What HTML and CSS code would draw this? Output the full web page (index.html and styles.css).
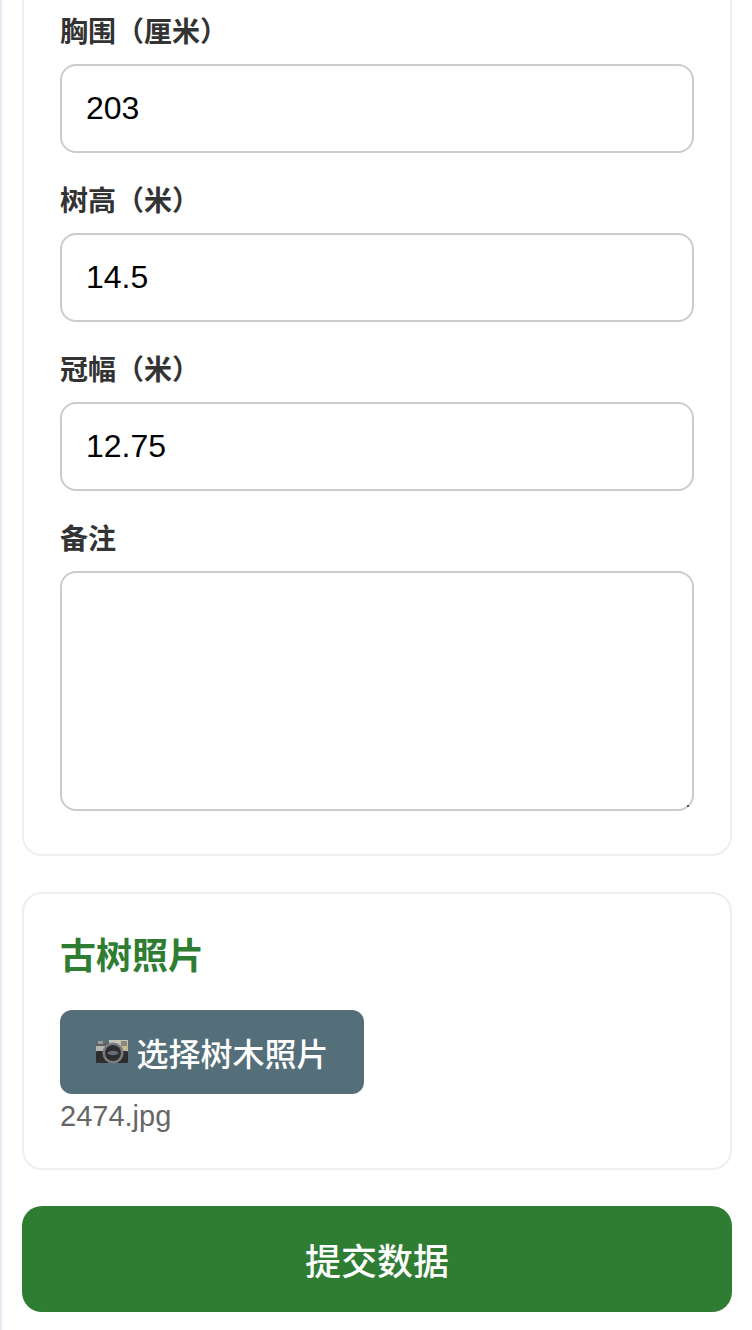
FILE: index.html
```html
<html>
<head>
  <title>古树数据</title>
  <link rel="stylesheet" href="styles.css">
</head>
<body>
  <div class="page">
    <div class="card card-cut">
      <div class="field">
        <label>胸围（厘米）</label>
        <input type="text" value="203">
      </div>
      <div class="field">
        <label>树高（米）</label>
        <input type="text" value="14.5">
      </div>
      <div class="field">
        <label>冠幅（米）</label>
        <input type="text" value="12.75">
      </div>
      <div class="field field-last">
        <label>备注</label>
        <div class="note-box">
          <textarea></textarea>
          <span class="grip"></span>
        </div>
      </div>
    </div>

    <div class="card card-photo">
      <h2>古树照片</h2>
      <button class="photo-btn">
        <svg class="camera" viewBox="0 0 32 24" width="32" height="24">
          <rect x="0" y="3" width="11" height="4" rx="1" fill="#5f5f60"/>
          <rect x="2" y="1" width="5" height="3" fill="#9a9a9a"/>
          <rect x="13" y="0" width="19" height="6" fill="#c4c4bf"/>
          <rect x="25" y="1" width="6" height="5" fill="#8d8875"/>
          <rect x="0" y="6" width="32" height="6" fill="#b5b5b2"/>
          <rect x="0" y="11" width="32" height="12" rx="1" fill="#2e2e30"/>
          <circle cx="17" cy="13" r="10.5" fill="#7b7d80"/>
          <circle cx="17" cy="13" r="8" fill="#2c2e32"/>
          <ellipse cx="17" cy="13" rx="5.5" ry="2.2" fill="#686c72"/>
          <circle cx="29" cy="8" r="1.4" fill="#e8c53a"/>
        </svg>
        <span>选择树木照片</span>
      </button>
      <div class="file-name">2474.jpg</div>
    </div>

    <button class="submit-btn">提交数据</button>
  </div>
</body>
</html>
```

FILE: styles.css
```css
body {
  margin: 0;
  background: #e6ecf4;
  font-family: "Liberation Sans", "Noto Sans CJK SC", sans-serif;
  text-spacing-trim: space-all;
}

.page {
  margin-left: 2px;
  background: #fff;
  padding: 0 20px 18px 20px;
}

.card {
  border: 2px solid #eee;
  border-radius: 20px;
  padding: 36px;
  margin-bottom: 36px;
}

.card-cut {
  border-top: none;
  border-top-left-radius: 0;
  border-top-right-radius: 0;
  padding-top: 16px;
  padding-bottom: 43px;
}

.field {
  margin-bottom: 32px;
}

.field-last {
  margin-bottom: 0;
}

label {
  display: block;
  font-size: 28px;
  line-height: 33px;
  font-weight: bold;
  color: #333;
  margin-bottom: 15px;
}

input,
textarea {
  display: block;
  width: 100%;
  box-sizing: border-box;
  border: 2px solid #ccc;
  border-radius: 16px;
  background: #fff;
  color: #000;
  font-family: inherit;
  font-size: 32px;
  padding: 24px;
  outline: none;
}

input {
  height: 89px;
}

textarea {
  height: 240px;
  resize: none;
}

.note-box {
  position: relative;
}

.grip {
  position: absolute;
  right: 5px;
  bottom: 4px;
  width: 2px;
  height: 2px;
  background: #555;
}

.card-photo {
  padding-top: 40px;
  padding-bottom: 30px;
}

h2 {
  margin: 0 0 30px 0;
  font-size: 36px;
  line-height: 46px;
  font-weight: bold;
  color: #2e7d32;
}

.photo-btn {
  display: flex;
  align-items: center;
  justify-content: center;
  gap: 8px;
  width: 304px;
  height: 84px;
  padding: 0 0 0 1px;
  border: none;
  border-radius: 12px;
  background: #546e7a;
  color: #fff;
  font-family: inherit;
  font-size: 32px;
  font-weight: 500;
}

.camera {
  display: block;
}

.file-name {
  font-size: 29px;
  line-height: 44px;
  color: #666;
}

.submit-btn {
  display: block;
  width: 100%;
  height: 106px;
  border: none;
  border-radius: 20px;
  background: #2e7d32;
  color: #fff;
  font-family: inherit;
  font-size: 36px;
  font-weight: 500;
}
```
